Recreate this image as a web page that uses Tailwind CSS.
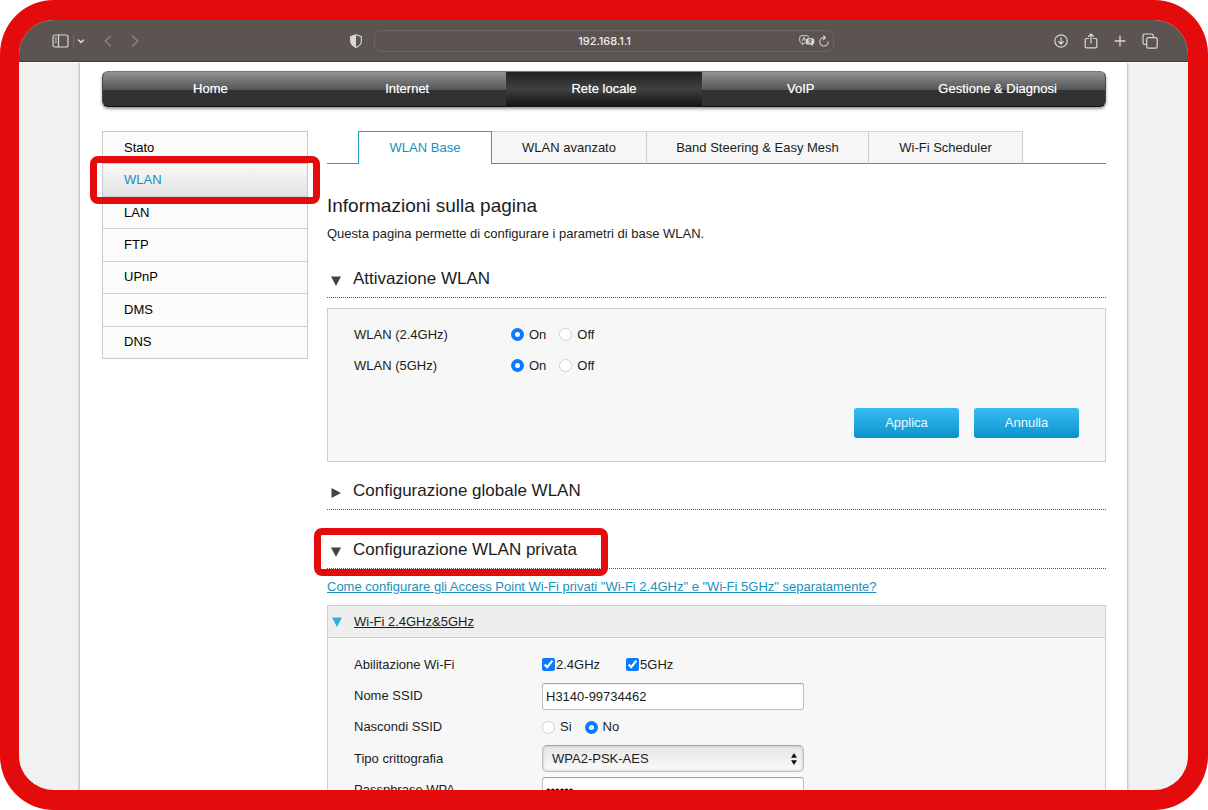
<!DOCTYPE html>
<html lang="it">
<head>
<meta charset="utf-8">
<title>192.168.1.1</title>
<script src="https://cdn.jsdelivr.net/npm/@tailwindcss/browser@4"></script>
</head>
<body class="bg-white">
<div class="flex h-screen flex-col overflow-hidden rounded-[54px] border-20 border-l-[19px] border-[#e30b0b] bg-[#f1f1f1] font-['Liberation_Sans',Arial,sans-serif] text-[13px] leading-4 text-[#1c1c1c]">

  <!-- Browser toolbar -->
  <header class="flex h-[42px] shrink-0 items-center border-b border-[#3d3735] bg-[#5c5451] text-[#d9d6d5]">
    <div class="flex flex-1 items-center pl-[30px]">
      <button type="button" aria-label="Barra laterale" class="ml-[3px] flex">
        <svg class="h-[14px] w-[17px]" viewBox="0 0 17 14" fill="none" stroke="currentColor" stroke-width="1.2"><rect x="1" y="1" width="15" height="12" rx="2"/><path d="M6.5 1v12"/><path d="M2.8 3.8h2M2.8 6h2M2.8 8.200h2" stroke-width="1"/></svg>
      </button>
      <span class="ml-1 h-4 w-px bg-[#6d6562]"></span>
      <button type="button" aria-label="Gruppi di pannelli" class="ml-[3px] flex">
        <svg class="h-2 w-2" viewBox="0 0 8 8" fill="none" stroke="currentColor" stroke-width="1.6" stroke-linecap="round" stroke-linejoin="round"><path d="M1.500 3l2.500 2.400L6.500 3"/></svg>
      </button>
      <button type="button" aria-label="Indietro" class="ml-[19px] flex text-[#8f8885]">
        <svg class="h-3 w-2" viewBox="0 0 8 12" fill="none" stroke="currentColor" stroke-width="1.300" stroke-linecap="round" stroke-linejoin="round"><path d="M6.500 1L1.200 6l5.300 5"/></svg>
      </button>
      <button type="button" aria-label="Avanti" class="ml-[19px] flex text-[#8f8885]">
        <svg class="h-3 w-2" viewBox="0 0 8 12" fill="none" stroke="currentColor" stroke-width="1.300" stroke-linecap="round" stroke-linejoin="round"><path d="M1.500 1l5.300 5-5.300 5"/></svg>
      </button>
      <button type="button" aria-label="Rapporto sulla privacy" class="mr-3 ml-auto flex">
        <svg class="h-[14px] w-3" viewBox="0 0 12 14"><path d="M6 .8L11.300 2.500v5c0 2.600-2.300 4.500-5.300 5.900C3 12 .7 10.100.7 7.500v-5z" fill="none" stroke="currentColor" stroke-width="1.100" stroke-linejoin="round"/><path d="M6 .8v12.600C3 12 .7 10.100.7 7.500v-5z" fill="currentColor"/></svg>
      </button>
    </div>
    <div class="flex h-[22px] w-[460px] items-center rounded-[7px] border border-[#6f6764] px-1">
      <span class="w-8"></span>
      <label for="url" class="sr-only">Indirizzo</label>
      <input id="url" value="192.168.1.1" class="h-5 min-w-0 flex-1 bg-transparent text-center font-['Inter'] text-[11px] font-medium text-[#efeeed]">
      <button type="button" aria-label="Traduci" class="flex">
        <svg class="h-3 w-4" viewBox="0 0 16 12" fill="none" stroke="currentColor" stroke-width="1" stroke-linejoin="round"><path d="M6.500 8H5.200L3.300 9.800V8C1.600 7.800.7 7 .7 5.500V3C.7 1.500 1.500.7 3 .7h4.500C8.900.7 9.600 1.200 9.800 2.500"/><path d="M3.300 6L5 2.300 6 4.500M3.900 4.800h2" stroke-width=".9"/><path d="M8.700 3.200h4.600c1.200 0 2 .8 2 2v2.300c0 1.100-.6 1.800-1.600 1.900v1.900l-2.100-1.900H8.700c-1.200 0-2-.8-2-2V5.200c0-1.200.8-2 2-2z" fill="currentColor" stroke="none"/><path d="M9 5h4M11 4.200V5M9.500 8c1.400-.6 2.300-1.600 2.700-3M9.800 5.500C10.300 6.700 11.200 7.500 12.600 8" stroke="#5c5451" stroke-width=".8"/></svg>
      </button>
      <button type="button" aria-label="Ricarica" class="ml-1 flex">
        <svg class="h-3 w-[10px]" viewBox="0 0 10 12" fill="none" stroke="currentColor" stroke-width="1.100" stroke-linecap="round" stroke-linejoin="round"><path d="M9.200 6.800A4.200 4.200 0 1 1 5 2.600h1.300M4.500.8l2 1.800-2 2"/></svg>
      </button>
    </div>
    <div class="flex flex-1 items-center justify-end gap-4 pr-[30px]">
      <button type="button" aria-label="Download" class="flex">
        <svg class="size-[14px]" viewBox="0 0 14 14" fill="none" stroke="currentColor" stroke-width="1.200" stroke-linecap="round" stroke-linejoin="round"><circle cx="7" cy="7" r="6.200"/><path d="M7 3.800v6M4.600 7.600L7 10l2.400-2.400"/></svg>
      </button>
      <button type="button" aria-label="Condividi" class="flex">
        <svg class="h-4 w-[14px]" viewBox="0 0 14 16" fill="none" stroke="currentColor" stroke-width="1.200" stroke-linecap="round" stroke-linejoin="round"><path d="M4.500 5.500h-2A1.300 1.300 0 0 0 1.200 6.800v6.700c0 .7.600 1.300 1.300 1.300h9c.7 0 1.300-.6 1.300-1.300V6.800c0-.7-.6-1.300-1.300-1.300h-2M7 10V1M4.500 3.300L7 .8l2.500 2.500"/></svg>
      </button>
      <button type="button" aria-label="Nuovo pannello" class="flex">
        <svg class="size-3" viewBox="0 0 12 12" stroke="currentColor" stroke-width="1.300" stroke-linecap="round"><path d="M6 1v10M1 6h10"/></svg>
      </button>
      <button type="button" aria-label="Panoramica pannelli" class="flex">
        <svg class="size-4" viewBox="0 0 16 16" fill="none" stroke="currentColor" stroke-width="1.200" stroke-linejoin="round"><rect x="4.700" y="4.700" width="10.500" height="10.500" rx="1.800"/><path d="M4.500 11.400H2.800A1.800 1.800 0 0 1 1 9.600V2.800A1.800 1.800 0 0 1 2.800 1h6.800a1.800 1.800 0 0 1 1.800 1.800v1.700"/></svg>
      </button>
    </div>
  </header>

  <!-- Router page -->
  <div class="min-h-0 flex-1 overflow-hidden border-t border-white">
    <div class="mx-auto min-h-full max-w-[1049px] border-x border-[#c8c8c8] bg-white pt-2 pr-[21px] pl-[22px] shadow-[0_0_2px_#bbb]">

      <nav aria-label="Principale" class="grid h-9 grid-cols-5 rounded-md border border-[#777] border-x-[#444] border-b-[#111] bg-linear-to-b from-[#929292] from-0% via-[#555658] via-52% to-[#313332] to-53% px-[9px] text-center leading-[34px] text-white shadow-[0_2px_3px_#999] [text-shadow:0_0_1px_#ffffff80]">
        <a href="#">Home</a>
        <a href="#">Internet</a>
        <a href="#" aria-current="page" class="bg-linear-to-b from-[#222] from-0% via-[#414141] via-50% to-[#161616] to-100%">Rete locale</a>
        <a href="#">VoIP</a>
        <a href="#">Gestione &amp; Diagnosi</a>
      </nav>

      <div class="mt-6 flex gap-[19px]">
        <ul class="flex h-[228px] w-[206px] shrink-0 flex-col divide-y divide-[#cfcfcf] border border-[#c9c9c9] bg-[#fbfbfb] text-black">
          <li class="flex flex-1"><a href="#" class="flex flex-1 items-center pl-[21px]">Stato</a></li>
          <li class="relative flex flex-1 bg-linear-to-b from-[#f8f8f8] to-[#e4e4e4]"><a href="#" aria-current="page" class="flex flex-1 items-center pl-[21px] text-[#1791bd]">WLAN</a>
            <span class="pointer-events-none absolute -inset-x-[13px] -inset-y-[8px] z-10 rounded-lg border-7 border-[#e30b0b]"></span></li>
          <li class="flex flex-1"><a href="#" class="flex flex-1 items-center pl-[21px]">LAN</a></li>
          <li class="flex flex-1"><a href="#" class="flex flex-1 items-center pl-[21px]">FTP</a></li>
          <li class="flex flex-1"><a href="#" class="flex flex-1 items-center pl-[21px]">UPnP</a></li>
          <li class="flex flex-1"><a href="#" class="flex flex-1 items-center pl-[21px]">DMS</a></li>
          <li class="flex flex-1"><a href="#" class="flex flex-1 items-center pl-[21px]">DNS</a></li>
        </ul>

        <main class="min-w-0 flex-1">
          <nav aria-label="Impostazioni WLAN" class="flex h-[33px] text-center leading-[31px]">
            <span class="w-[31px] border-b border-[#22a0c8]"></span>
            <a href="#" aria-current="page" class="w-[134px] border border-b-0 border-[#22a0c8] text-[#1791bd]">WLAN Base</a>
            <a href="#" class="w-[155px] border-t border-r border-b border-t-[#d4d4d4] border-r-[#ccc] border-b-[#22a0c8] bg-[#f6f6f6]">WLAN avanzato</a>
            <a href="#" class="w-[222px] border-t border-r border-b border-t-[#d4d4d4] border-r-[#ccc] border-b-[#22a0c8] bg-[#f6f6f6]">Band Steering &amp; Easy Mesh</a>
            <a href="#" class="w-[154px] border-t border-r border-b border-t-[#d4d4d4] border-r-[#ccc] border-b-[#22a0c8] bg-[#f6f6f6]">Wi-Fi Scheduler</a>
            <span class="flex-1 border-b border-[#22a0c8]"></span>
          </nav>

          <h1 class="mt-[30px] text-[19px] leading-6">Informazioni sulla pagina</h1>
          <p class="mt-2">Questa pagina permette di configurare i parametri di base WLAN.</p>

          <section class="mt-[26px]">
            <h2 class="border-b border-dotted border-[#555] pb-[7px] text-[17px] leading-[22px]">
              <button type="button" aria-expanded="true" class="flex w-full items-center gap-3 pl-1">
                <svg class="mt-1 h-[10px] w-[10px] shrink-0" viewBox="0 0 10 10" fill="#444"><path d="M0 .5h10L5 10z"/></svg>Attivazione WLAN
              </button>
            </h2>
            <form class="mt-[10px] border border-[#cdcdcd] bg-[#f7f7f7] px-[26px] pt-[10px] pb-[23px]">
              <div class="flex h-[31px] items-center" role="radiogroup" aria-labelledby="w24">
                <span id="w24" class="w-[157px]">WLAN (2.4GHz)</span>
                <label class="flex items-center gap-[5px]"><input type="radio" name="w24" checked class="size-[13px] appearance-none rounded-full border border-[#d2d2d2] bg-white checked:border-4 checked:border-[#0a7bff]">On</label>
                <label class="ml-[13px] flex items-center gap-[5px]"><input type="radio" name="w24" class="size-[13px] appearance-none rounded-full border border-[#d2d2d2] bg-white checked:border-4 checked:border-[#0a7bff]">Off</label>
              </div>
              <div class="flex h-[31px] items-center" role="radiogroup" aria-labelledby="w5">
                <span id="w5" class="w-[157px]">WLAN (5GHz)</span>
                <label class="flex items-center gap-[5px]"><input type="radio" name="w5" checked class="size-[13px] appearance-none rounded-full border border-[#d2d2d2] bg-white checked:border-4 checked:border-[#0a7bff]">On</label>
                <label class="ml-[13px] flex items-center gap-[5px]"><input type="radio" name="w5" class="size-[13px] appearance-none rounded-full border border-[#d2d2d2] bg-white checked:border-4 checked:border-[#0a7bff]">Off</label>
              </div>
              <div class="mt-[27px] flex justify-end gap-[15px] text-[#ecfaff]">
                <button type="button" class="h-[30px] w-[105px] rounded-[3px] bg-linear-to-b from-[#36bdf8] to-[#0593c9]">Applica</button>
                <button type="button" class="h-[30px] w-[105px] rounded-[3px] bg-linear-to-b from-[#36bdf8] to-[#0593c9]">Annulla</button>
              </div>
            </form>
          </section>

          <section class="mt-[18px]">
            <h2 class="border-b border-dotted border-[#555] pb-[7px] text-[17px] leading-[22px]">
              <button type="button" aria-expanded="false" class="flex w-full items-center gap-3 pl-1">
                <svg class="mt-1 h-[10px] w-[10px] shrink-0" viewBox="0 0 10 10" fill="#444"><path d="M.5 0v10L10 5z"/></svg>Configurazione globale WLAN
              </button>
            </h2>
          </section>

          <section class="mt-[29px]">
            <h2 class="relative border-b border-dotted border-[#555] pb-[7px] text-[17px] leading-[22px]">
              <button type="button" aria-expanded="true" class="flex w-full items-center gap-3 pl-1">
                <svg class="mt-1 h-[10px] w-[10px] shrink-0" viewBox="0 0 10 10" fill="#444"><path d="M0 .5h10L5 10z"/></svg>Configurazione WLAN privata
              </button>
              <span class="pointer-events-none absolute -top-[11px] -left-[13px] h-12 w-[294px] rounded-lg border-7 border-[#e30b0b]"></span>
            </h2>
            <p class="mt-[10px]"><a href="#" class="text-[#1791bd] underline">Come configurare gli Access Point Wi-Fi privati "Wi-Fi 2.4GHz" e "Wi-Fi 5GHz" separatamente?</a></p>
            <form class="mt-[10px] border border-[#cdcdcd] bg-[#f7f7f7]">
              <h3 class="border-b border-[#cdcdcd] bg-[#eee]">
                <button type="button" aria-expanded="true" class="flex h-[31px] w-full items-center gap-3 pl-1 underline">
                  <svg class="h-[10px] w-[10px] shrink-0" viewBox="0 0 10 10" fill="#2fb0e2"><path d="M0 .5h10L5 10z"/></svg>Wi-Fi 2.4GHz&amp;5GHz
                </button>
              </h3>
              <div class="grid h-[168px] auto-rows-fr grid-cols-[188px_1fr] items-center px-[26px] pt-[11px]">
                <span id="en">Abilitazione Wi-Fi</span>
                <div class="flex gap-[26px]" role="group" aria-labelledby="en">
                  <label class="flex items-center gap-px"><input type="checkbox" checked class="size-[13px] accent-[#0a7bff]">2.4GHz</label>
                  <label class="flex items-center gap-px"><input type="checkbox" checked class="size-[13px] accent-[#0a7bff]">5GHz</label>
                </div>
                <label for="ssid">Nome SSID</label>
                <input id="ssid" value="H3140-99734462" class="h-[27px] w-[262px] rounded-[3px] border border-[#bdbdbd] border-t-[#a5a5a5] bg-white px-[3px] inset-shadow-2xs">
                <span id="hide">Nascondi SSID</span>
                <div class="flex" role="radiogroup" aria-labelledby="hide">
                  <label class="flex items-center gap-[5px]"><input type="radio" name="hide" class="size-[13px] appearance-none rounded-full border border-[#d2d2d2] bg-white checked:border-4 checked:border-[#0a7bff]">Si</label>
                  <label class="ml-[13px] flex items-center gap-[5px]"><input type="radio" name="hide" checked class="size-[13px] appearance-none rounded-full border border-[#d2d2d2] bg-white checked:border-4 checked:border-[#0a7bff]">No</label>
                </div>
                <label for="enc">Tipo crittografia</label>
                <div class="relative w-[262px]">
                  <select id="enc" class="block h-[27px] w-full appearance-none rounded-[5px] border border-[#bdbdbd] border-t-[#a5a5a5] bg-linear-to-b from-[#e6e6e6] to-[#fafafa] px-[9px] inset-shadow-[0_0_3px_#bbb]"><option>WPA2-PSK-AES</option></select>
                  <svg class="pointer-events-none absolute top-2 right-[7px] h-3 w-[6px]" viewBox="0 0 6 12" fill="#111"><path d="M3 0l3 4.800H0zM3 12L0 7.200h6z"/></svg>
                </div>
                <label for="pass">Passphrase WPA</label>
                <input id="pass" type="password" value="secret" class="h-[27px] w-[262px] rounded-[3px] border border-[#bdbdbd] border-t-[#a5a5a5] bg-white px-[3px] text-black inset-shadow-2xs">
              </div>
            </form>
          </section>
        </main>
      </div>
    </div>
  </div>
</div>
</body>
</html>
